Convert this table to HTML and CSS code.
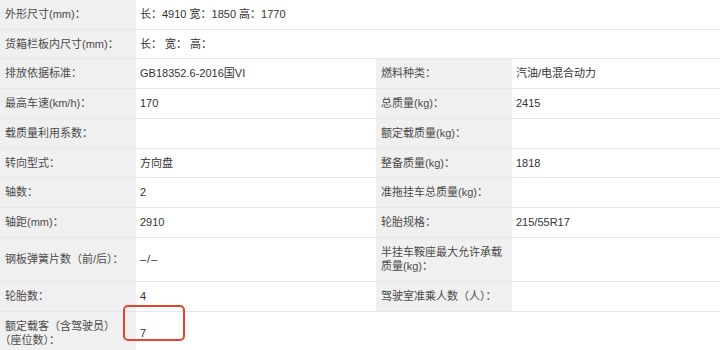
FILE: index.html
```html
<!DOCTYPE html>
<html lang="zh-CN">
<head>
<meta charset="utf-8">
<title>车辆参数</title>
<link rel="stylesheet" href="styles.css">
</head>
<body>
<table class="spec">
  <colgroup>
    <col class="c-label">
    <col class="c-value">
    <col class="c-label">
    <col class="c-value2">
  </colgroup>
  <tbody>
    <tr>
      <td class="lbl">外形尺寸(mm)：</td>
      <td class="val" colspan="3">长：4910 宽：1850 高：1770</td>
    </tr>
    <tr>
      <td class="lbl">货箱栏板内尺寸(mm)：</td>
      <td class="val" colspan="3">长： 宽： 高：</td>
    </tr>
    <tr>
      <td class="lbl">排放依据标准：</td>
      <td class="val">GB18352.6-2016国VI</td>
      <td class="lbl">燃料种类：</td>
      <td class="val">汽油/电混合动力</td>
    </tr>
    <tr>
      <td class="lbl">最高车速(km/h)：</td>
      <td class="val">170</td>
      <td class="lbl">总质量(kg)：</td>
      <td class="val">2415</td>
    </tr>
    <tr>
      <td class="lbl">载质量利用系数：</td>
      <td class="val"></td>
      <td class="lbl">额定载质量(kg)：</td>
      <td class="val"></td>
    </tr>
    <tr>
      <td class="lbl">转向型式：</td>
      <td class="val">方向盘</td>
      <td class="lbl">整备质量(kg)：</td>
      <td class="val">1818</td>
    </tr>
    <tr>
      <td class="lbl">轴数：</td>
      <td class="val">2</td>
      <td class="lbl">准拖挂车总质量(kg)：</td>
      <td class="val"></td>
    </tr>
    <tr>
      <td class="lbl">轴距(mm)：</td>
      <td class="val">2910</td>
      <td class="lbl">轮胎规格：</td>
      <td class="val">215/55R17</td>
    </tr>
    <tr>
      <td class="lbl">钢板弹簧片数（前/后）：</td>
      <td class="val"><span class="dash">–/–</span></td>
      <td class="lbl">半挂车鞍座最大允许承载质量(kg)：</td>
      <td class="val"></td>
    </tr>
    <tr>
      <td class="lbl">轮胎数：</td>
      <td class="val">4</td>
      <td class="lbl">驾驶室准乘人数（人）：</td>
      <td class="val"></td>
    </tr>
    <tr>
      <td class="lbl">额定载客（含驾驶员）<span class="keep">（座位数）：</span></td>
      <td class="val mark-cell" colspan="3">7<span class="mark"></span></td>
    </tr>
  </tbody>
</table>
</body>
</html>
```

FILE: styles.css
```css
html, body {
  margin: 0;
  padding: 0;
  background: #ffffff;
}

body {
  font-family: "Liberation Sans", "Noto Sans CJK SC", sans-serif;
  font-size: 11px;
  color: #3a3a3a;
}

.spec {
  width: 720px;
  border-collapse: collapse;
  table-layout: fixed;
}

.c-label { width: 136px; }
.c-value { width: 240px; }
.c-value2 { width: 208px; }

.spec td {
  padding: 7px 4px;
  line-height: 14.7px;
  vertical-align: middle;
  border-bottom: 1px solid #e6e6e6;
}

.spec td.lbl {
  background: #f0f0f0;
  color: #4a4a4a;
  padding: 7px 3px 7px 5px;
}

.spec td.val {
  background: #ffffff;
  color: #333333;
}

.keep {
  white-space: nowrap;
}

.dash {
  letter-spacing: 1px;
}

.mark-cell {
  position: relative;
}

.mark {
  position: absolute;
  left: -13px;
  top: -7px;
  width: 58px;
  height: 32px;
  border: 2px solid #e5452f;
  border-radius: 5px;
}
```
